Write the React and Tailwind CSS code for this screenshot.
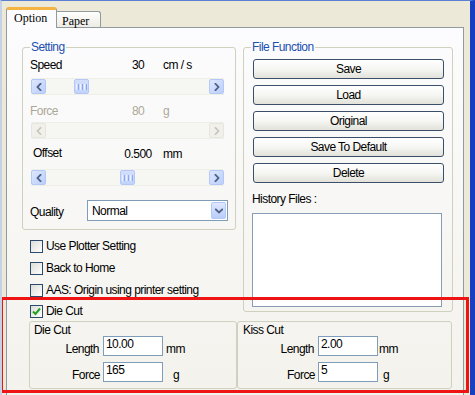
import React from 'react'

const SANS = "font-['Liberation_Sans',Arial,sans-serif] tracking-[-0.55px]"

function Chevron({ dir = 'left', color = '#4d6185' }) {
  const d = {
    left: 'M4.5 0.8 L1.5 4 L4.5 7.2',
    right: 'M1.5 0.8 L4.5 4 L1.5 7.2',
    down: 'M0.8 1.5 L4 4.5 L7.2 1.5',
  }[dir]
  const size = dir === 'down' ? [8, 6] : [6, 8]
  return (
    <svg width={size[0]} height={size[1]} viewBox={`0 0 ${size[0]} ${size[1]}`}>
      <path d={d} stroke={color} strokeWidth="1.8" fill="none" strokeLinecap="square" />
    </svg>
  )
}

function ArrowBtn({ dir, disabled }) {
  return (
    <div
      className={`w-[15px] h-full shrink-0 rounded-[2px] border flex items-center justify-center ${
        disabled
          ? 'border-[#e6e5df] bg-[#f1f0ea]'
          : 'border-[#b4c8f6] bg-gradient-to-br from-[#dde7fe] to-[#bccffb]'
      }`}
    >
      <Chevron dir={dir} color={disabled ? '#c9c8bf' : '#4d6185'} />
    </div>
  )
}

function ScrollBar({ thumb = 'ml-[28px]', disabled }) {
  return (
    <div className="ml-[1px] w-[193px] h-[17px] flex bg-[#f6f6f2] border-y border-[#efefe9]">
      <ArrowBtn dir="left" disabled={disabled} />
      <div className="flex-1 flex">
        {!disabled && (
          <div className={`${thumb} w-[15px] h-full rounded-[2px] border border-[#b4c8f6] bg-gradient-to-b from-[#d3dffd] to-[#c2d3fc] flex items-center justify-center gap-[1px]`}>
            <span className="w-[1px] h-[6px] bg-[#eef3ff]" />
            <span className="w-[1px] h-[6px] bg-[#8ea8ee]" />
            <span className="w-[1px] h-[6px] bg-[#eef3ff]" />
            <span className="w-[1px] h-[6px] bg-[#8ea8ee]" />
            <span className="w-[1px] h-[6px] bg-[#eef3ff]" />
            <span className="w-[1px] h-[6px] bg-[#8ea8ee]" />
          </div>
        )}
      </div>
      <ArrowBtn dir="right" disabled={disabled} />
    </div>
  )
}

function CheckBox({ checked }) {
  return (
    <span className="w-[13px] h-[13px] shrink-0 border border-[#2a4a6e] bg-gradient-to-br from-[#dcdcd7] to-white flex items-center justify-center">
      {checked && (
        <svg width="9" height="9" viewBox="0 0 9 9">
          <path d="M1 4.5 L3.5 7 L8 1.5" stroke="#21a121" strokeWidth="2" fill="none" />
        </svg>
      )}
    </span>
  )
}

function Button({ children }) {
  return (
    <div className="ml-[1px] w-[191px] h-[20px] rounded-[3px] border border-[#3b4f6b] bg-gradient-to-b from-white via-[#f6f6f3] to-[#e2e2da] flex items-center justify-center">
      {children}
    </div>
  )
}

function TextBox({ value }) {
  return (
    <div className="w-[60px] h-[20px] shrink-0 border border-[#7f9db9] bg-white px-[2px] leading-[14px]">
      {value}
    </div>
  )
}

export default function App() {
  const checks = [
    ['Use Plotter Setting', false, 'h-[22px]'],
    ['Back to Home', false, 'h-[22px]'],
    ['AAS: Origin using printer setting', false, 'h-[22px]'],
    ['Die Cut', true, 'h-[20px]'],
  ]

  return (
    <div className={`relative w-[475px] h-[395px] overflow-hidden bg-[#ece9d8] border-t border-t-[#5a80d6] border-l-2 border-l-[#c4d2e8] border-r-[5px] border-r-[#1640c0] text-[12px] leading-[14px] text-black ${SANS}`}>
      {/* tabs */}
      <div className="ml-[4px] mt-[6px] flex items-end -mb-[1px] relative z-10 tracking-normal font-['Liberation_Serif',serif]">
        <div className="w-[51px] h-[21px] bg-[#fcfcfe] border-x border-[#919b9c] border-t-[3px] border-t-[#f3b443] rounded-t-[3px] pl-[7px] pt-[1px]">
          Option
        </div>
        <div className="w-[44px] h-[16px] mb-[1px] border-t border-r border-[#919b9c] rounded-tr-[3px] bg-gradient-to-b from-white to-[#ecebe5] pl-[5px] pt-[2px]">
          Paper
        </div>
      </div>

      {/* panel */}
      <div className="ml-[4px] w-[458px] h-[370px] border border-[#919b9c] bg-gradient-to-b from-[#fcfcfe] to-[#f3f2ec]">
        <div className="mt-[12px] flex items-start">
          {/* left column */}
          <div className="ml-[15px] w-[213px]">
            <fieldset className="rounded-[3px] border border-[#d0d0bf] px-[7px] pb-[8px]">
              <legend className="px-[1px] text-[#1b4fb0]">Setting</legend>

              <div className="mt-[3px] h-[16px] flex items-center">
                <span className="w-[88px]">Speed</span>
                <span className="w-[40px] text-center">30</span>
                <span className="ml-[5px]">cm / s</span>
              </div>
              <div className="mt-[5px]">
                <ScrollBar thumb="ml-[28px]" />
              </div>

              <div className="mt-[8px] h-[16px] flex items-center text-[#aca899]">
                <span className="w-[88px]">Force</span>
                <span className="w-[40px] text-center">80</span>
                <span className="ml-[5px]">g</span>
              </div>
              <div className="mt-[3px]">
                <ScrollBar disabled />
              </div>

              <div className="mt-[7px] h-[16px] flex items-center">
                <span className="w-[88px] pl-[3px] -mt-[3px]">Offset</span>
                <span className="w-[40px] text-center">0.500</span>
                <span className="ml-[5px]">mm</span>
              </div>
              <div className="mt-[7px]">
                <ScrollBar thumb="ml-[74px]" />
              </div>

              <div className="mt-[14px] h-[21px] flex items-center">
                <span className="w-[57px] pt-[2px]">Quality</span>
                <div className="w-[141px] h-[21px] border border-[#7f9db9] bg-white flex items-center justify-between pl-[4px] pr-[1px]">
                  <span>Normal</span>
                  <div className="w-[15px] h-[17px] rounded-[2px] border border-[#b4c8f6] bg-gradient-to-b from-[#dfe8fe] to-[#b9cdfa] flex items-center justify-center">
                    <Chevron dir="down" />
                  </div>
                </div>
              </div>
            </fieldset>

            <div className="mt-[5px]">
              {checks.map(([label, checked, h]) => (
                <div key={label} className={`${h} pl-[8px] flex items-center gap-[3px]`}>
                  <CheckBox checked={checked} />
                  <span>{label}</span>
                </div>
              ))}
            </div>
          </div>

          {/* right column */}
          <div className="ml-[8px] w-[209px]">
            <fieldset className="rounded-[3px] border border-[#d0d0bf] px-[8px] pb-[4px]">
              <legend className="-ml-[1px] px-[1px] text-[#1b4fb0]">File Function</legend>
              <div className="mt-[5px] flex flex-col gap-[6px]">
                <Button>Save</Button>
                <Button>Load</Button>
                <Button>Original</Button>
                <Button>Save To Default</Button>
                <Button>Delete</Button>
              </div>
              <div className="mt-[9px]">History Files :</div>
              <div className="mt-[7px] w-[190px] h-[94px] border border-[#8a9cb3] bg-white" />
            </fieldset>
          </div>
        </div>

        {/* die cut / kiss cut */}
        <div className="ml-[22px] flex">
          <div className="w-[208px] h-[68px] rounded-[3px] border border-[#d0d0bf] pt-[2px]">
            <div className="pl-[4px] h-[12px] leading-[12px]">Die Cut</div>
            <div className="h-[20px] flex items-end">
              <span className="w-[69px] text-right">Length</span>
              <div className="ml-[4px] self-start"><TextBox value="10.00" /></div>
              <span className="ml-[3px]">mm</span>
            </div>
            <div className="mt-[6px] h-[20px] flex items-end">
              <span className="w-[70px] text-right">Force</span>
              <div className="ml-[3px] self-start"><TextBox value="165" /></div>
              <span className="ml-[10px]">g</span>
            </div>
          </div>
          <div className="w-[215px] h-[68px] rounded-[3px] border border-[#d0d0bf] pt-[2px]">
            <div className="pl-[5px] h-[12px] leading-[12px]">Kiss Cut</div>
            <div className="h-[20px] flex items-end">
              <span className="w-[76px] text-right">Length</span>
              <div className="ml-[4px] self-start"><TextBox value="2.00" /></div>
              <span className="ml-[1px]">mm</span>
            </div>
            <div className="mt-[6px] h-[20px] flex items-end">
              <span className="w-[77px] text-right">Force</span>
              <div className="ml-[3px] self-start"><TextBox value="5" /></div>
              <span className="ml-[5px]">g</span>
            </div>
          </div>
        </div>
      </div>

      {/* red highlight annotation */}
      <div className="absolute left-[-2px] top-[296px] w-[469px] h-[96px] border-[3px] border-[#ee1414] pointer-events-none" />
    </div>
  )
}
